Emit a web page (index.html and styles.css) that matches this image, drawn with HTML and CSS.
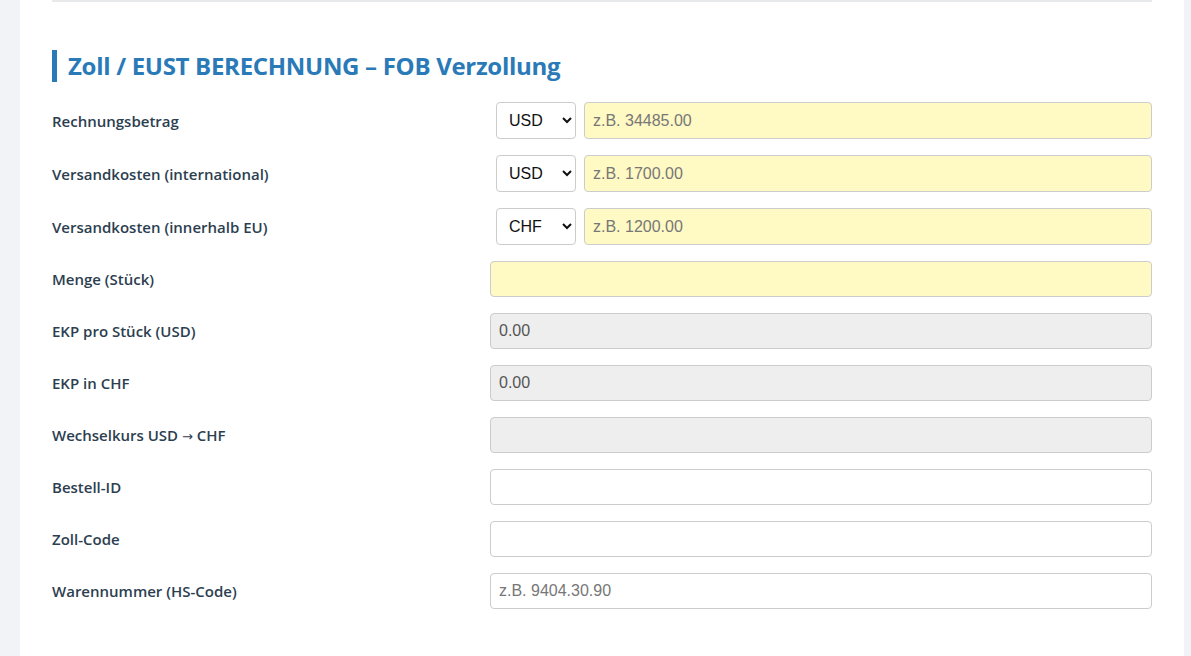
FILE: index.html
```html
<!DOCTYPE html>
<html lang="de">
<head>
    <meta charset="UTF-8">
    <meta name="viewport" content="width=device-width, initial-scale=1.0">
    <title>Zoll / EUST Berechnung</title>
    <link rel="stylesheet" href="styles.css">
</head>
<body>

<div class="card">
    <div class="divider"></div>

    <h2 class="section-title">Zoll / EUST BERECHNUNG – FOB Verzollung</h2>

    <div class="form">
        <div class="row tall">
            <label for="betrag">Rechnungsbetrag</label>
            <div class="field-group">
                <select class="currency">
                    <option selected>USD</option>
                    <option>CHF</option>
                    <option>EUR</option>
                </select>
                <input id="betrag" class="input required" type="text" placeholder="z.B. 34485.00">
            </div>
        </div>

        <div class="row tall">
            <label for="versand-int">Versandkosten (international)</label>
            <div class="field-group">
                <select class="currency">
                    <option selected>USD</option>
                    <option>CHF</option>
                    <option>EUR</option>
                </select>
                <input id="versand-int" class="input required" type="text" placeholder="z.B. 1700.00">
            </div>
        </div>

        <div class="row tall">
            <label for="versand-eu">Versandkosten (innerhalb EU)</label>
            <div class="field-group">
                <select class="currency">
                    <option>USD</option>
                    <option selected>CHF</option>
                    <option>EUR</option>
                </select>
                <input id="versand-eu" class="input required" type="text" placeholder="z.B. 1200.00">
            </div>
        </div>

        <div class="row">
            <label for="menge">Menge (Stück)</label>
            <input id="menge" class="input required" type="text">
        </div>

        <div class="row">
            <label for="ekp-usd">EKP pro Stück (USD)</label>
            <input id="ekp-usd" class="input readonly" type="text" value="0.00" readonly>
        </div>

        <div class="row">
            <label for="ekp-chf">EKP in CHF</label>
            <input id="ekp-chf" class="input readonly" type="text" value="0.00" readonly>
        </div>

        <div class="row">
            <label for="kurs">Wechselkurs USD <span class="arrow">→</span> CHF</label>
            <input id="kurs" class="input readonly" type="text" readonly>
        </div>

        <div class="row">
            <label for="bestell-id">Bestell-ID</label>
            <input id="bestell-id" class="input" type="text">
        </div>

        <div class="row">
            <label for="zoll-code">Zoll-Code</label>
            <input id="zoll-code" class="input" type="text">
        </div>

        <div class="row">
            <label for="hs-code">Warennummer (HS-Code)</label>
            <input id="hs-code" class="input" type="text" placeholder="z.B. 9404.30.90">
        </div>
    </div>
</div>

</body>
</html>
```

FILE: styles.css
```css
body {
    margin: 0;
    background-color: #f2f3f7;
    font-family: "Open Sans", "Noto Sans", sans-serif;
    color: #2c3e50;
    overflow: hidden;
}

.card {
    background-color: #fff;
    margin: 0 7px 0 20px;
    padding: 0 32px 60px 32px;
    min-height: 656px;
    box-sizing: border-box;
}

.divider {
    height: 2px;
    background-color: #e8e9eb;
}

.section-title {
    margin: 48px 0 20px 0;
    padding-left: 11px;
    border-left: 5px solid #2a7ab8;
    color: #2a7ab8;
    font-size: 24px;
    font-weight: 700;
    line-height: 32px;
    letter-spacing: -0.3px;
}

.form {
    display: flex;
    flex-direction: column;
    gap: 16px;
}

.row {
    display: grid;
    grid-template-columns: 438px 1fr;
    align-items: center;
    height: 36px;
}

.row.tall {
    height: 37px;
}

.row label {
    font-size: 15px;
    font-weight: 600;
    color: #2c3e50;
}

.arrow {
    font-family: "DejaVu Sans", sans-serif;
    font-weight: 400;
    font-size: 13px;
}

.field-group {
    display: flex;
    gap: 8px;
    padding-left: 6px;
}

.currency {
    width: 80px;
    height: 37px;
    padding: 0 8px;
    font-family: "Liberation Sans", Arial, sans-serif;
    font-size: 16px;
    color: #111;
    background-color: #fff;
    border: 1px solid #ccc;
    border-radius: 4px;
}

.input {
    flex: 1;
    height: 36px;
    box-sizing: border-box;
    padding: 0 8px;
    font-family: "Liberation Sans", Arial, sans-serif;
    font-size: 16px;
    color: #444;
    background-color: #fff;
    border: 1px solid #ccc;
    border-radius: 4px;
    outline: none;
}

.field-group .input {
    height: 37px;
}

.input::placeholder {
    color: #777;
}

.input.required {
    background-color: #fff9c4;
}

.input.readonly {
    background-color: #eee;
    color: #555;
}
```
